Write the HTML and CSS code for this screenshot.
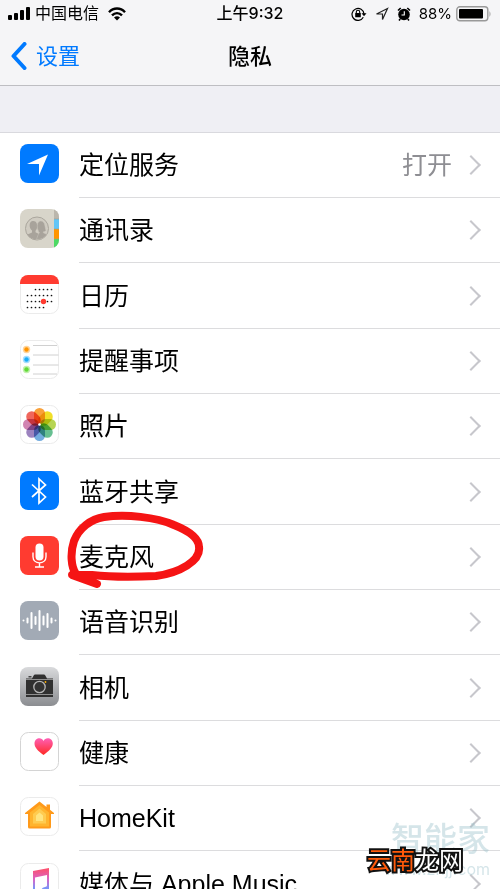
FILE: index.html
```html
<!DOCTYPE html>
<html lang="zh-CN">
<head>
    <meta charset="UTF-8">
    <meta name="viewport" content="width=device-width, initial-scale=1.0">
    <title>隐私</title>
    <link rel="stylesheet" href="styles.css">
</head>
<body>
    <header class="header">
        <div class="status-bar">
            <div class="status-left">
                <svg width="22" height="14" viewBox="0 0 22 14">
                    <rect x="0" y="8" width="4" height="5" rx="1"/>
                    <rect x="6" y="6" width="4" height="7" rx="1"/>
                    <rect x="12" y="3" width="4" height="10" rx="1"/>
                    <rect x="18" y="0" width="4" height="13" rx="1"/>
                </svg>
                <span class="carrier">中国电信</span>
                <svg width="18" height="14" viewBox="0 0 18 14" fill="none" stroke="#000" stroke-width="2.4">
                    <path d="M1 5.2C5.500 .3 12.500 .3 17 5.200"/>
                    <path d="M4 8.400C7 5.300 11 5.300 14 8.400"/>
                    <path d="M6 10.600Q9 8 12 10.600L9 13.500Z" fill="#000" stroke="none"/>
                </svg>
            </div>
            <span class="time">上午9:32</span>
            <div class="status-right">
                <svg class="status-icon" width="16" height="14" viewBox="0 0 16 14">
                    <path d="M12.300 10.300A6 6 0 1 1 13 7" fill="none" stroke="#000" stroke-width="1.200"/>
                    <path d="M10.500 6.300h5L13 9.300z"/>
                    <rect x="4.200" y="6" width="5.600" height="4.200" rx=".5"/>
                    <path d="M5.300 6.500V5a1.700 1.700 0 0 1 3.400 0v1.500" fill="none" stroke="#000" stroke-width="1.100"/>
                </svg>
                <svg class="status-icon" width="14" height="14" viewBox="0 0 14 14">
                    <path d="M1.500 7 12.500 1.500 7.500 12.500V7z" fill="none" stroke="#222" stroke-width="1.200"/>
                </svg>
                <svg class="status-icon" width="14" height="14" viewBox="0 0 14 14">
                    <circle cx="7" cy="7.500" r="5.800"/>
                    <path d="M1 3.500 3.700 1M13 3.500 10.300 1M3.200 12 2 13.500M10.800 12 12 13.500" stroke="#000" stroke-width="1.600"/>
                    <path d="M7.300 4.200V8H4.500" fill="none" stroke="#fff" stroke-width="1.100"/>
                </svg>
                <span class="percent">88%</span>
                <svg width="36" height="16" viewBox="0 0 36 16">
                    <rect x=".8" y=".8" width="31" height="14" rx="3" fill="none" stroke="#999" stroke-width="1.400"/>
                    <rect x="3" y="3" width="24" height="9.600" rx="1"/>
                    <path d="M33.500 5q2 3 0 6z" fill="#999"/>
                </svg>
            </div>
        </div>
        <nav class="nav-bar">
            <a class="back" href="#">
                <svg width="17" height="28" viewBox="0 0 17 28">
                    <path d="M14.500 2 3.500 14 14.500 26" fill="none" stroke="#007aff" stroke-width="4" stroke-linecap="round" stroke-linejoin="round"/>
                </svg>
                <span>设置</span>
            </a>
            <h1 class="title">隐私</h1>
        </nav>
    </header>

    <main>
        <ul class="list">
            <li><a class="row" href="#">
                <svg class="icon" viewBox="0 0 39 39">
                    <rect width="39" height="39" rx="8" fill="#007aff"/>
                    <path d="M7 20 28 10.500 19 31.500V20z" fill="#fff"/>
                </svg>
                <span class="cell"><span class="label">定位服务</span><span class="value">打开</span></span>
            </a></li>
            <li><a class="row" href="#">
                <svg class="icon" viewBox="0 0 39 39">
                    <clipPath id="tile"><rect width="39" height="39" rx="8"/></clipPath>
                    <g clip-path="url(#tile)">
                        <rect width="39" height="39" fill="#d8d5ca"/>
                        <rect x="34" width="5" height="10" fill="#bbb6ac"/>
                        <rect x="34" y="10" width="5" height="10" fill="#62c5f7"/>
                        <rect x="34" y="20" width="5" height="10" fill="#ff9500"/>
                        <rect x="34" y="30" width="5" height="9" fill="#4cd964"/>
                        <path d="M34 10h5M34 20h5M34 30h5" stroke="#a19d91" stroke-width=".6"/>
                        <circle cx="17" cy="19.500" r="11.500" fill="#d0ccc2" stroke="#aaa69d"/>
                        <path d="M17 30.300C13 30.500 9 28.500 7.500 25.500L12 23.500V21.500C9 19.500 8.500 12.500 12.500 12c4-.5 5 3 4.500 6.500-.2 1.800-1 2.500-1.500 3.200v1.600l4.500 2.200z" fill="#a8a39b"/>
                        <path d="M16.500 30.500 18 26l1.500-2.500-1-.500v-1c-1.500-2-2.500-9.500 2.200-10 4.800 0 4 7 5.300 9.500-1 1-1.700 1.200-2.700 1.300v1l3.700 1.700c-2 3.300-6 5.200-10.500 5z" fill="#a8a39b" stroke="#c8c4ba" stroke-width=".5"/>
                    </g>
                </svg>
                <span class="cell"><span class="label">通讯录</span></span>
            </a></li>
            <li><a class="row" href="#">
                <svg class="icon" viewBox="0 0 39 39">
                    <rect x=".5" y=".5" width="38" height="38" rx="8" fill="#fff" stroke="#ebebeb"/>
                    <path d="M0 9V8a8 8 0 0 1 8-8h23a8 8 0 0 1 8 8v1z" fill="#ff3b30"/>
                    <g stroke="#111" stroke-width="1.700" stroke-linecap="round" stroke-dasharray="0 4">
                        <path d="M15.500 14.500h16.200M7.500 20.500h24.200M7.500 26.500h24.200M7.500 32.500h16.200"/>
                    </g>
                    <circle cx="23.500" cy="26.500" r="2.700" fill="#ff3b30"/>
                </svg>
                <span class="cell"><span class="label">日历</span></span>
            </a></li>
            <li><a class="row" href="#">
                <svg class="icon" viewBox="0 0 39 39">
                    <rect x=".5" y=".5" width="38" height="38" rx="8" fill="#fff" stroke="#ebebeb"/>
                    <path d="M13 5.500h24M13 15h25.500M13 25h25.500M13 34h24" stroke="#d0d0d0"/>
                    <circle cx="6.500" cy="9.500" r="3.700" fill="#ffd49b"/><circle cx="6.500" cy="9.500" r="2.200" fill="#ff9500"/>
                    <circle cx="6.500" cy="19.500" r="3.700" fill="#a4ddff"/><circle cx="6.500" cy="19.500" r="2.200" fill="#1badf8"/>
                    <circle cx="6.500" cy="29.500" r="3.700" fill="#c1f0ad"/><circle cx="6.500" cy="29.500" r="2.200" fill="#63da38"/>
                </svg>
                <span class="cell"><span class="label">提醒事项</span></span>
            </a></li>
            <li><a class="row" href="#">
                <svg class="icon" viewBox="0 0 39 39">
                    <rect x=".5" y=".5" width="38" height="38" rx="8" fill="#fff" stroke="#ebebeb"/>
                    <g class="petals">
                        <rect x="14" y="3" width="11" height="16" rx="5.500" fill="#f9a13a"/>
                        <rect x="14" y="3" width="11" height="16" rx="5.500" fill="#f1df28" transform="rotate(45 19.500 19.500)"/>
                        <rect x="14" y="3" width="11" height="16" rx="5.500" fill="#b7d553" transform="rotate(90 19.500 19.500)"/>
                        <rect x="14" y="3" width="11" height="16" rx="5.500" fill="#66bf91" transform="rotate(135 19.500 19.500)"/>
                        <rect x="14" y="3" width="11" height="16" rx="5.500" fill="#73acdf" transform="rotate(180 19.500 19.500)"/>
                        <rect x="14" y="3" width="11" height="16" rx="5.500" fill="#9c83bf" transform="rotate(225 19.500 19.500)"/>
                        <rect x="14" y="3" width="11" height="16" rx="5.500" fill="#d184b1" transform="rotate(270 19.500 19.500)"/>
                        <rect x="14" y="3" width="11" height="16" rx="5.500" fill="#f0665c" transform="rotate(315 19.500 19.500)"/>
                    </g>
                    <circle cx="19.500" cy="19.500" r="1.300" fill="#fff"/>
                </svg>
                <span class="cell"><span class="label">照片</span></span>
            </a></li>
            <li><a class="row" href="#">
                <svg class="icon" viewBox="0 0 39 39">
                    <rect width="39" height="39" rx="8" fill="#007aff"/>
                    <path d="M12 13.500 25.500 26 19 32V8l6.500 6L12 26" fill="none" stroke="#fff" stroke-width="1.700"/>
                </svg>
                <span class="cell"><span class="label">蓝牙共享</span></span>
            </a></li>
            <li class="marked"><a class="row" href="#">
                <svg class="icon" viewBox="0 0 39 39">
                    <rect width="39" height="39" rx="8" fill="#ff3b30"/>
                    <rect x="15.500" y="7.500" width="8" height="17" rx="4" fill="#fff"/>
                    <path d="M13 16.500v4.200c0 8.200 13 8.200 13 0v-4.200M19.500 27v3.700M15 31h9" fill="none" stroke="#fff" stroke-width="1.400"/>
                </svg>
                <span class="cell"><span class="label">麦克风</span></span>
            </a>
                <!-- hand-drawn ring -->
                <svg class="ring" width="142" height="80" viewBox="0 0 142 80">
                    <path d="M10 63C5 56 4 42 8 30C13 17 25 8 38 6C60 3 90 6 108 14C123 20 133 27 133 36C135 50 113 62 90 65C70 66 44 66 26 64L6 64L31 73" fill="none" stroke="#f51414" stroke-width="8" stroke-linecap="round" stroke-linejoin="round"/>
                </svg>
            </li>
            <li><a class="row" href="#">
                <svg class="icon" viewBox="0 0 39 39">
                    <rect width="39" height="39" rx="8" fill="#a2aab5"/>
                    <path d="M3.500 19.500h0M7.500 17.500v4M11.500 12v15M15.500 16v7M19.500 10v19M23.500 15.500v8M27.500 13v13M31.500 17.500v4M35.500 19.500h0" stroke="#fff" stroke-width="2" stroke-linecap="round"/>
                </svg>
                <span class="cell"><span class="label">语音识别</span></span>
            </a></li>
            <li><a class="row" href="#">
                <svg class="icon" viewBox="0 0 39 39">
                    <linearGradient id="metal" x2="0" y2="1"><stop stop-color="#d9dadc"/><stop offset="1" stop-color="#8b8d91"/></linearGradient>
                    <rect width="39" height="39" rx="8" fill="url(#metal)"/>
                    <path d="M6 11.500h6l2-3.500q.300-.5 1-.5h9q.7 0 1 .5l2 3.500h6V30H6z" fill="#303030"/>
                    <rect x="8.500" y="9" width="3" height="1.500" fill="#444"/>
                    <path d="M6 12.500h27M6 27.500h27" stroke="#aaa" stroke-width=".8"/>
                    <circle cx="19.500" cy="20" r="5.700" fill="#333" stroke="#b5b5b5" stroke-width="1.300"/>
                    <circle cx="25.500" cy="15" r=".9" fill="#ffb000"/>
                </svg>
                <span class="cell"><span class="label">相机</span></span>
            </a></li>
            <li><a class="row" href="#">
                <svg class="icon" viewBox="0 0 39 39">
                    <linearGradient id="heart" x2="0" y2="1"><stop stop-color="#ff5fb4"/><stop offset="1" stop-color="#ff2a24"/></linearGradient>
                    <rect x=".5" y=".5" width="38" height="38" rx="8" fill="#fff" stroke="#d4d4d4"/>
                    <path d="M23.500 23C18 19 14.500 15.500 14.500 11.500c0-5.500 7-7 9-2.500 2-4.500 9.300-3 9.300 2.500 0 4-3.800 7.500-9.300 11.500z" fill="url(#heart)"/>
                </svg>
                <span class="cell"><span class="label">健康</span></span>
            </a></li>
            <li><a class="row" href="#">
                <svg class="icon" viewBox="0 0 39 39">
                    <rect x=".5" y=".5" width="38" height="38" rx="8" fill="#fff" stroke="#ebebeb"/>
                    <path d="M5 16 19.500 4.500 26.500 10V7.500h3.500v5.300L34 16v1h-3v13q0 1.500-1.500 1.500h-20Q8 31.500 8 30V17H5z" fill="#ff9a1a"/>
                    <path d="M10 15.500 19.500 8l9.500 7.500v14H10z" fill="#ffb42e"/>
                    <path d="M13 17 19.500 11.500 26 17v9.500H13z" fill="#ffcb50"/>
                    <path d="M16 18.500 19.500 15.500l3.500 3V24h-7z" fill="#ffe480"/>
                </svg>
                <span class="cell"><span class="label">HomeKit</span></span>
            </a></li>
            <li><a class="row" href="#">
                <svg class="icon" viewBox="0 0 39 39">
                    <linearGradient id="note" gradientUnits="userSpaceOnUse" x1="20" y1="5" x2="20" y2="34"><stop stop-color="#ff4f68"/><stop offset=".4" stop-color="#d765c8"/><stop offset=".75" stop-color="#6a9cff"/><stop offset="1" stop-color="#3cc8f5"/></linearGradient>
                    <rect x=".5" y=".5" width="38" height="38" rx="8" fill="#fff" stroke="#ebebeb"/>
                    <path d="M13 8 29 5v21q0 4-4 4-3.500 0-3.500-2.800 0-2.700 3.500-3.200 2-.3 2-1.500V12l-12 2.500V29q0 4-4 4-3.500 0-3.500-2.800Q7.500 27.500 11 27q2-.3 2-1.500z" fill="url(#note)"/>
                </svg>
                <span class="cell"><span class="label">媒体与 Apple Music</span></span>
            </a></li>
        </ul>
    </main>

    <!-- site marks over the list -->
    <div class="watermark">
        <span class="watermark-name">智能家</span>
        <span class="watermark-url">www.znjj.com</span>
    </div>
    <div class="site-logo"><span class="site-logo-accent">云南</span>龙网</div>
</body>
</html>
```

FILE: styles.css
```css
* {
    box-sizing: border-box;
}

body {
    position: relative;
    margin: 0;
    height: 100vh;
    overflow: hidden;
    background: #efeff4;
    color: #000;
    font-family: Inter, "Noto Sans CJK SC", sans-serif;
}

a {
    color: inherit;
    text-decoration: none;
}

svg {
    display: block;
    flex: none;
}

.header {
    background: #f5f5f7;
    border-bottom: 1px solid #bebec2;
}

.status-bar {
    display: grid;
    grid-template-columns: 1fr auto 1fr;
    align-items: center;
    height: 27px;
    padding: 0 8px;
    font-size: 16px;
    line-height: 27px;
}

.status-left,
.status-right {
    display: flex;
    align-items: center;
}

.carrier {
    margin: 0 9px 0 5px;
}

.time {
    font-weight: 500;
}

.status-right {
    justify-content: flex-end;
}

.status-icon {
    margin-right: 8px;
}

.percent {
    margin-right: 4px;
    font-size: 15px;
}

.nav-bar {
    display: grid;
    grid-template-columns: 1fr auto 1fr;
    align-items: center;
    height: 58px;
    padding: 0 10px;
}

.back {
    display: flex;
    align-items: center;
    gap: 9px;
    color: #007aff;
    font-size: 22px;
    line-height: 32px;
}

.title {
    margin: 0;
    font-size: 22px;
    font-weight: 500;
    line-height: 32px;
}

.list {
    margin: 46px 0 0;
    padding: 0;
    list-style: none;
    background: #fff;
    border-top: 1px solid #d9d9de;
}

.row {
    display: flex;
    align-items: center;
    gap: 20px;
    height: 65px;
    padding-left: 20px;
}

li:nth-child(3n) .row {
    height: 66px;
}

.icon {
    width: 39px;
    height: 39px;
    margin-bottom: 4px;
}

.cell {
    display: flex;
    flex: 1;
    align-items: center;
    align-self: stretch;
    padding-right: 20px;
    border-bottom: 1px solid #dcdcde;
    font-family: "Liberation Sans", "Noto Sans CJK SC", sans-serif;
    font-size: 25px;
    line-height: 36px;
}

/* disclosure arrow */
.cell::after {
    content: "";
    width: 12px;
    height: 12px;
    margin-right: 2px;
    border: solid #c7c7cc;
    border-width: 2px 2px 0 0;
    transform: rotate(45deg);
}

.label {
    flex: 1;
}

.value {
    margin-right: 12px;
    color: #8e8e93;
}

.petals rect {
    mix-blend-mode: multiply;
}

.marked {
    position: relative;
}

.ring {
    position: absolute;
    top: -14px;
    left: 66px;
}

.watermark {
    position: absolute;
    right: 10px;
    bottom: 8px;
    display: flex;
    flex-direction: column;
    align-items: flex-end;
    color: rgba(150, 190, 200, 0.4);
}

.watermark-name {
    font-size: 33px;
    font-weight: 500;
    line-height: 36px;
}

.watermark-url {
    font-size: 16px;
    line-height: 24px;
}

.site-logo {
    position: absolute;
    right: 37px;
    bottom: 10px;
    color: #fff;
    font-size: 24px;
    line-height: 36px;
    -webkit-text-stroke: 4px #111;
    paint-order: stroke fill;
}

.site-logo-accent {
    color: #ff5a0a;
}
```
